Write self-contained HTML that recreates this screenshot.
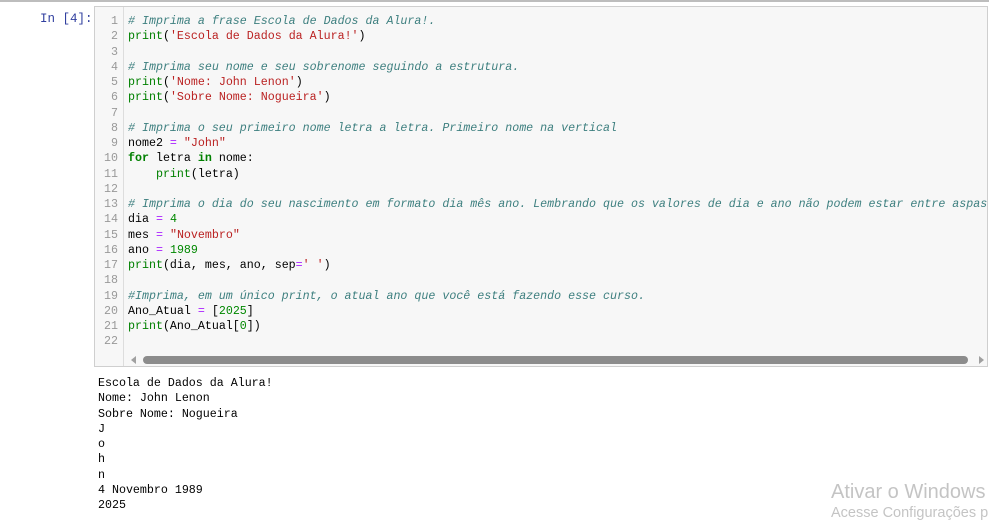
<!DOCTYPE html><html><head><style>
body{margin:0;width:989px;height:521px;background:#fff;position:relative;overflow:hidden;font-family:"Liberation Mono",monospace;}
.top{position:absolute;left:0;top:0;width:989px;height:2px;background:#bdbdbd}
.prompt{position:absolute;left:40px;top:12px;font-size:12.5px;color:#303f9f}
.cell{position:absolute;left:94px;top:6px;width:894px;height:361px;background:#f7f7f7;border:1px solid #cfcfcf;box-sizing:border-box;overflow:hidden}
.gut{position:absolute;left:0;top:0;width:28px;height:100%;background:#f7f7f7;border-right:1px solid #ddd}
pre{margin:0;font-family:"Liberation Mono",monospace;font-size:11.65px;line-height:15.25px;white-space:pre}
.ln{position:absolute;left:0;top:7px;width:23px;text-align:right;color:#999}
.code{position:absolute;left:33px;top:7px;color:#000}
.c{color:#3d7f7f;font-style:italic}.s{color:#ba2121}.b{color:#008000}.k{color:#008000;font-weight:bold}.o{color:#aa22ff}.n{color:#080}
.sb{position:absolute;left:48px;top:349px;width:825px;height:8px;background:#8c8c8c;border-radius:4px}
.out{position:absolute;left:98px;top:376px;color:#000}
.wm{position:absolute;left:831px;font-family:"Liberation Sans",sans-serif;color:#c4c4c4;white-space:nowrap}
</style></head><body>
<div class="top"></div>
<div class="prompt">In [4]:</div>
<div class="cell">
<div class="gut"></div>
<pre class="ln">1
2
3
4
5
6
7
8
9
10
11
12
13
14
15
16
17
18
19
20
21
22</pre>
<pre class="code"><span class="c"># Imprima a frase Escola de Dados da Alura!.</span>
<span class="b">print</span>(<span class="s">'Escola de Dados da Alura!'</span>)

<span class="c"># Imprima seu nome e seu sobrenome seguindo a estrutura.</span>
<span class="b">print</span>(<span class="s">'Nome: John Lenon'</span>)
<span class="b">print</span>(<span class="s">'Sobre Nome: Nogueira'</span>)

<span class="c"># Imprima o seu primeiro nome letra a letra. Primeiro nome na vertical</span>
nome2 <span class="o">=</span> <span class="s">"John"</span>
<span class="k">for</span> letra <span class="k">in</span> nome:
    <span class="b">print</span>(letra)

<span class="c"># Imprima o dia do seu nascimento em formato dia mês ano. Lembrando que os valores de dia e ano não podem estar entre aspas.</span>
dia <span class="o">=</span> <span class="n">4</span>
mes <span class="o">=</span> <span class="s">"Novembro"</span>
ano <span class="o">=</span> <span class="n">1989</span>
<span class="b">print</span>(dia, mes, ano, sep<span class="o">=</span><span class="s">' '</span>)

<span class="c">#Imprima, em um único print, o atual ano que você está fazendo esse curso.</span>
Ano_Atual <span class="o">=</span> [<span class="n">2025</span>]
<span class="b">print</span>(Ano_Atual[<span class="n">0</span>])
</pre>
<div style="position:absolute;left:36px;top:349px;width:0;height:0;border-top:4px solid transparent;border-bottom:4px solid transparent;border-right:5px solid #a0a0a0"></div>
<div class="sb"></div>
<div style="position:absolute;left:884px;top:349px;width:0;height:0;border-top:4px solid transparent;border-bottom:4px solid transparent;border-left:5px solid #a0a0a0"></div>
</div>
<pre class="out">Escola de Dados da Alura!
Nome: John Lenon
Sobre Nome: Nogueira
J
o
h
n
4 Novembro 1989
2025</pre>
<div class="wm" style="top:481px;font-size:20px">Ativar o Windows</div>
<div class="wm" style="top:505px;font-size:14.5px">Acesse Configurações p</div>
</body></html>
